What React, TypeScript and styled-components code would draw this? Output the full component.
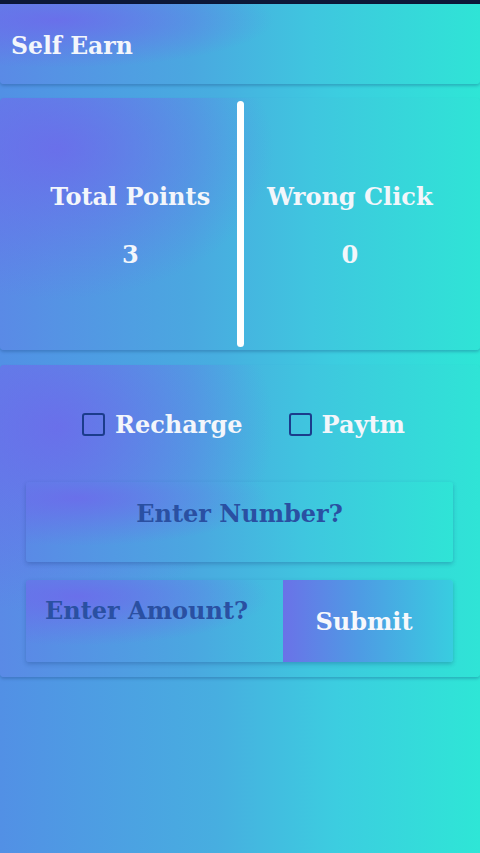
import * as React from 'react';
import styled, {createGlobalStyle} from 'styled-components';

const GlobalStyle = createGlobalStyle`
  html, body {
    margin: 0;
    padding: 0;
  }
  body {
    font-family: 'DejaVu Serif', 'Liberation Serif', serif;
    background: linear-gradient(90deg, #5290e5 0%, #47aee0 45%, #3ccde0 70%, #2ee6d6 100%);
    min-height: 853px;
  }
`;

const cardFill = `
  radial-gradient(ellipse 45% 60% at 12% 20%, rgba(112, 100, 236, 0.75), rgba(112, 100, 236, 0) 100%),
  linear-gradient(90deg, #5a8ae6 0%, #4aa8e0 40%, #3fc6df 65%, #2fe4d6 100%)
`;

const Page = styled.div`
  display: flex;
  flex-direction: column;
  min-height: 853px;
`;

const StatusBar = styled.div`
  height: 4px;
  background: #0c1838;
`;

const Card = styled.section<{$height: number; $gap: number}>`
  height: ${({$height}) => $height}px;
  margin-top: ${({$gap}) => $gap}px;
  background: ${cardFill};
  border-radius: 4px;
  box-shadow: 0 2px 3px rgba(20, 60, 120, 0.28);
  box-sizing: border-box;
`;

const Header = styled(Card)`
  display: flex;
  align-items: center;
  padding: 3px 0 0 11px;
  border-radius: 0 0 4px 4px;
`;

const Title = styled.h1`
  margin: 0;
  color: #f3f6fb;
  font-size: 23.5px;
  font-weight: bold;
`;

const Stats = styled(Card)`
  display: grid;
  grid-template-columns: 1fr auto 1fr;
  padding: 3px 24px;
`;

const StatColumn = styled.div`
  display: flex;
  flex-direction: column;
  align-items: center;
  justify-content: center;
  gap: 30px;
  padding-top: 4px;
  color: #f3f6fb;
  font-weight: bold;
  font-size: 24px;
  line-height: 28px;
`;

const Divider = styled.div`
  width: 7px;
  background: #ffffff;
  border-radius: 4px;
`;

const Form = styled(Card)`
  display: flex;
  flex-direction: column;
  padding: 0 27px 0 26px;
`;

const Options = styled.div`
  display: flex;
  justify-content: center;
  gap: 46px;
  padding: 46px 0 0 8px;
  height: 72px;
  box-sizing: border-box;
`;

const Option = styled.label`
  display: flex;
  align-items: center;
  gap: 10px;
  height: 26px;
  color: #f3f6fb;
  font-size: 24px;
  font-weight: bold;
`;

const Box = styled.span`
  width: 19px;
  height: 19px;
  border: 2px solid #1b3c8c;
  border-radius: 3px;
`;

const Field = styled.input<{$align: 'center' | 'left'}>`
  display: block;
  width: 100%;
  box-sizing: border-box;
  border: none;
  outline: none;
  background: transparent;
  font-family: inherit;
  font-weight: bold;
  font-size: 24px;
  color: #2a50a2;
  text-align: ${({$align}) => $align};
  &::placeholder {
    color: #2a50a2;
    opacity: 1;
  }
`;

const NumberBox = styled.div`
  height: 80px;
  margin-top: 45px;
  display: flex;
  background: ${cardFill};
  border-radius: 3px;
  box-shadow: 0 2px 4px rgba(20, 60, 120, 0.3);
  & > ${Field} {
    padding-bottom: 18px;
  }
`;

const AmountRow = styled.div`
  height: 82px;
  margin-top: 18px;
  display: grid;
  grid-template-columns: 257px 1fr;
  background: ${cardFill};
  border-radius: 3px;
  box-shadow: 0 2px 4px rgba(20, 60, 120, 0.3);
  overflow: hidden;
  & > ${Field} {
    padding: 0 0 22px 19px;
  }
`;

const Submit = styled.button`
  border: none;
  margin: 0;
  padding: 0 8px 0 0;
  font-family: inherit;
  font-weight: bold;
  font-size: 24px;
  color: #f6f8fc;
  background: linear-gradient(90deg, #6a72e8 0%, #4e9be4 45%, #38cde0 100%);
`;

export default function App() {
  return (
    <Page>
      <GlobalStyle />
      <StatusBar />
      <Header $height={80} $gap={0}>
        <Title>Self Earn</Title>
      </Header>
      <Stats $height={252} $gap={14}>
        <StatColumn>
          <div>Total Points</div>
          <div>3</div>
        </StatColumn>
        <Divider />
        <StatColumn>
          <div>Wrong Click</div>
          <div>0</div>
        </StatColumn>
      </Stats>
      <Form $height={312} $gap={15}>
        <Options>
          <Option>
            <Box />
            Recharge
          </Option>
          <Option>
            <Box />
            Paytm
          </Option>
        </Options>
        <NumberBox>
          <Field $align="center" placeholder="Enter Number?" />
        </NumberBox>
        <AmountRow>
          <Field $align="left" placeholder="Enter Amount?" />
          <Submit>Submit</Submit>
        </AmountRow>
      </Form>
    </Page>
  );
}
